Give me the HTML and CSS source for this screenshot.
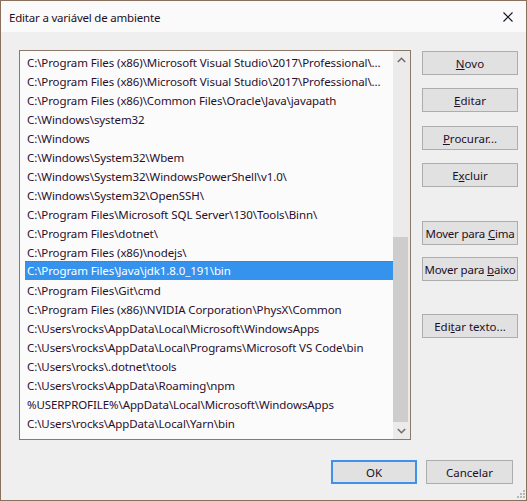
FILE: index.html
```html
<!DOCTYPE html>
<html lang="pt">
<head>
<meta charset="utf-8">
<title>Editar a variável de ambiente</title>
<link rel="stylesheet" href="styles.css">
</head>
<body>
<div class="window">
  <div class="titlebar">
    <span class="title">Editar a variável de ambiente</span>
    <svg class="close" width="10" height="10" viewBox="0 0 10 10"><path d="M0.5 0.5 L9.5 9.5 M9.5 0.5 L0.5 9.5" stroke="#1a0f1e" stroke-width="1.1" fill="none"/></svg>
  </div>
  <div class="body">
    <div class="main">
      <div class="listbox">
        <div class="rows">
          <div class="row">C:\Program Files (x86)\Microsoft Visual Studio\2017\Professional\…</div>
          <div class="row">C:\Program Files (x86)\Microsoft Visual Studio\2017\Professional\…</div>
          <div class="row">C:\Program Files (x86)\Common Files\Oracle\Java\javapath</div>
          <div class="row">C:\Windows\system32</div>
          <div class="row">C:\Windows</div>
          <div class="row">C:\Windows\System32\Wbem</div>
          <div class="row">C:\Windows\System32\WindowsPowerShell\v1.0\</div>
          <div class="row">C:\Windows\System32\OpenSSH\</div>
          <div class="row">C:\Program Files\Microsoft SQL Server\130\Tools\Binn\</div>
          <div class="row">C:\Program Files\dotnet\</div>
          <div class="row">C:\Program Files (x86)\nodejs\</div>
          <div class="row selected">C:\Program Files\Java\jdk1.8.0_191\bin</div>
          <div class="row">C:\Program Files\Git\cmd</div>
          <div class="row">C:\Program Files (x86)\NVIDIA Corporation\PhysX\Common</div>
          <div class="row">C:\Users\rocks\AppData\Local\Microsoft\WindowsApps</div>
          <div class="row">C:\Users\rocks\AppData\Local\Programs\Microsoft VS Code\bin</div>
          <div class="row">C:\Users\rocks\.dotnet\tools</div>
          <div class="row">C:\Users\rocks\AppData\Roaming\npm</div>
          <div class="row">%USERPROFILE%\AppData\Local\Microsoft\WindowsApps</div>
          <div class="row">C:\Users\rocks\AppData\Local\Yarn\bin</div>
        </div>
        <div class="scrollbar">
          <div class="arrow"><svg width="9" height="6" viewBox="0 0 9 6"><path d="M0.8 5 L4.5 1.3 L8.2 5" stroke="#7a6b63" stroke-width="1.6" fill="none"/></svg></div>
          <div class="track"><div class="thumb"></div></div>
          <div class="arrow"><svg width="9" height="6" viewBox="0 0 9 6"><path d="M0.8 1 L4.5 4.7 L8.2 1" stroke="#7a6b63" stroke-width="1.6" fill="none"/></svg></div>
        </div>
      </div>
      <div class="side">
        <button class="btn b-novo"><u>N</u>ovo</button>
        <button class="btn b-editar"><u>E</u>ditar</button>
        <button class="btn b-procurar"><u>P</u>rocurar...</button>
        <button class="btn b-excluir">E<u>x</u>cluir</button>
        <button class="btn b-cima">Mover para <u>C</u>ima</button>
        <button class="btn b-baixo">Mover para <u>b</u>aixo</button>
        <button class="btn b-texto">Edi<u>t</u>ar texto...</button>
      </div>
    </div>
    <div class="footer">
      <button class="btn ok">OK</button>
      <button class="btn cancel">Cancelar</button>
    </div>
  </div>
  <svg class="grip" width="8" height="8" viewBox="0 0 8 8"><g fill="#b8b8b8"><rect x="6" y="0" width="2" height="2"/><rect x="3" y="3" width="2" height="2"/><rect x="6" y="3" width="2" height="2"/><rect x="0" y="6" width="2" height="2"/><rect x="3" y="6" width="2" height="2"/><rect x="6" y="6" width="2" height="2"/></g></svg>
</div>
</body>
</html>
```
FILE: styles.css
```css
* { box-sizing: border-box; }
html, body { margin: 0; padding: 0; background: #f0f0f0; }
body {
  font-family: "Noto Sans", "Open Sans", sans-serif;
  font-size: 11.5px;
  color: #1e0f24;
}
.window {
  position: relative;
  width: 527px;
  height: 501px;
  border: 1px solid #8a6f5c;
  background: #efefef;
  display: flex;
  flex-direction: column;
}
.titlebar {
  height: 31px;
  background: #fafafa;
  display: flex;
  align-items: center;
  justify-content: space-between;
  padding: 1px 13px 0 8px;
}
.title { font-size: 11.5px; letter-spacing: -0.2px; color: #1e0f24; }
.close { display: block; }
.body {
  flex: 1;
  display: flex;
  flex-direction: column;
  padding: 18px 8px 0 18px;
}
.main { display: flex; gap: 11px; }
.listbox {
  width: 392px;
  height: 390px;
  border: 1px solid #8b7868;
  background: #fbfbfb;
  display: flex;
  padding-left: 5px;
}
.rows {
  width: 368px;
  padding-top: 1px;
  overflow: hidden;
}
.row {
  height: 19px;
  line-height: 19px;
  padding: 1px 8px 0 2px;
  white-space: nowrap;
  overflow: hidden;
  text-overflow: ellipsis;
  letter-spacing: -0.1px;
  color: #2a0f2c;
}
.row.selected {
  background: #3593ee;
  color: #fff;
  border-top: 1px dotted #7a6a80;
  line-height: 18px;
  padding-top: 0;
}
.scrollbar {
  width: 17px;
  display: flex;
  flex-direction: column;
  background: #ebebeb;
}
.arrow {
  height: 17px;
  display: flex;
  align-items: center;
  justify-content: center;
}
.track { flex: 1; display: flex; flex-direction: column; justify-content: flex-end; }
.thumb { height: 185px; background: #cdcdcd; margin: 0 2px 0 0; }
.side {
  display: flex;
  flex-direction: column;
  padding-top: 1px;
}
.btn {
  font-family: inherit;
  font-size: 11.5px;
  color: #1e0f24;
  background: #e1e1e1;
  border: 1px solid #adadad;
  height: 24px;
  padding: 0;
  white-space: nowrap;
  cursor: default;
}
.side .btn { width: 96px; }
.b-editar { margin-top: 13px; }
.b-procurar { margin-top: 14px; }
.b-excluir { margin-top: 13px; }
.b-cima { margin-top: 34px; }
.b-baixo { margin-top: 12px; }
.b-texto { margin-top: 33px; }
.b-cima, .b-baixo { letter-spacing: -0.2px; }
.footer {
  display: flex;
  justify-content: flex-end;
  gap: 9px;
  padding: 20px 5px 0 0;
}
.ok { width: 86px; border: 2px solid #3c92ec; }
.cancel { width: 87px; }
.grip { position: absolute; right: 1px; bottom: 2px; }
```
